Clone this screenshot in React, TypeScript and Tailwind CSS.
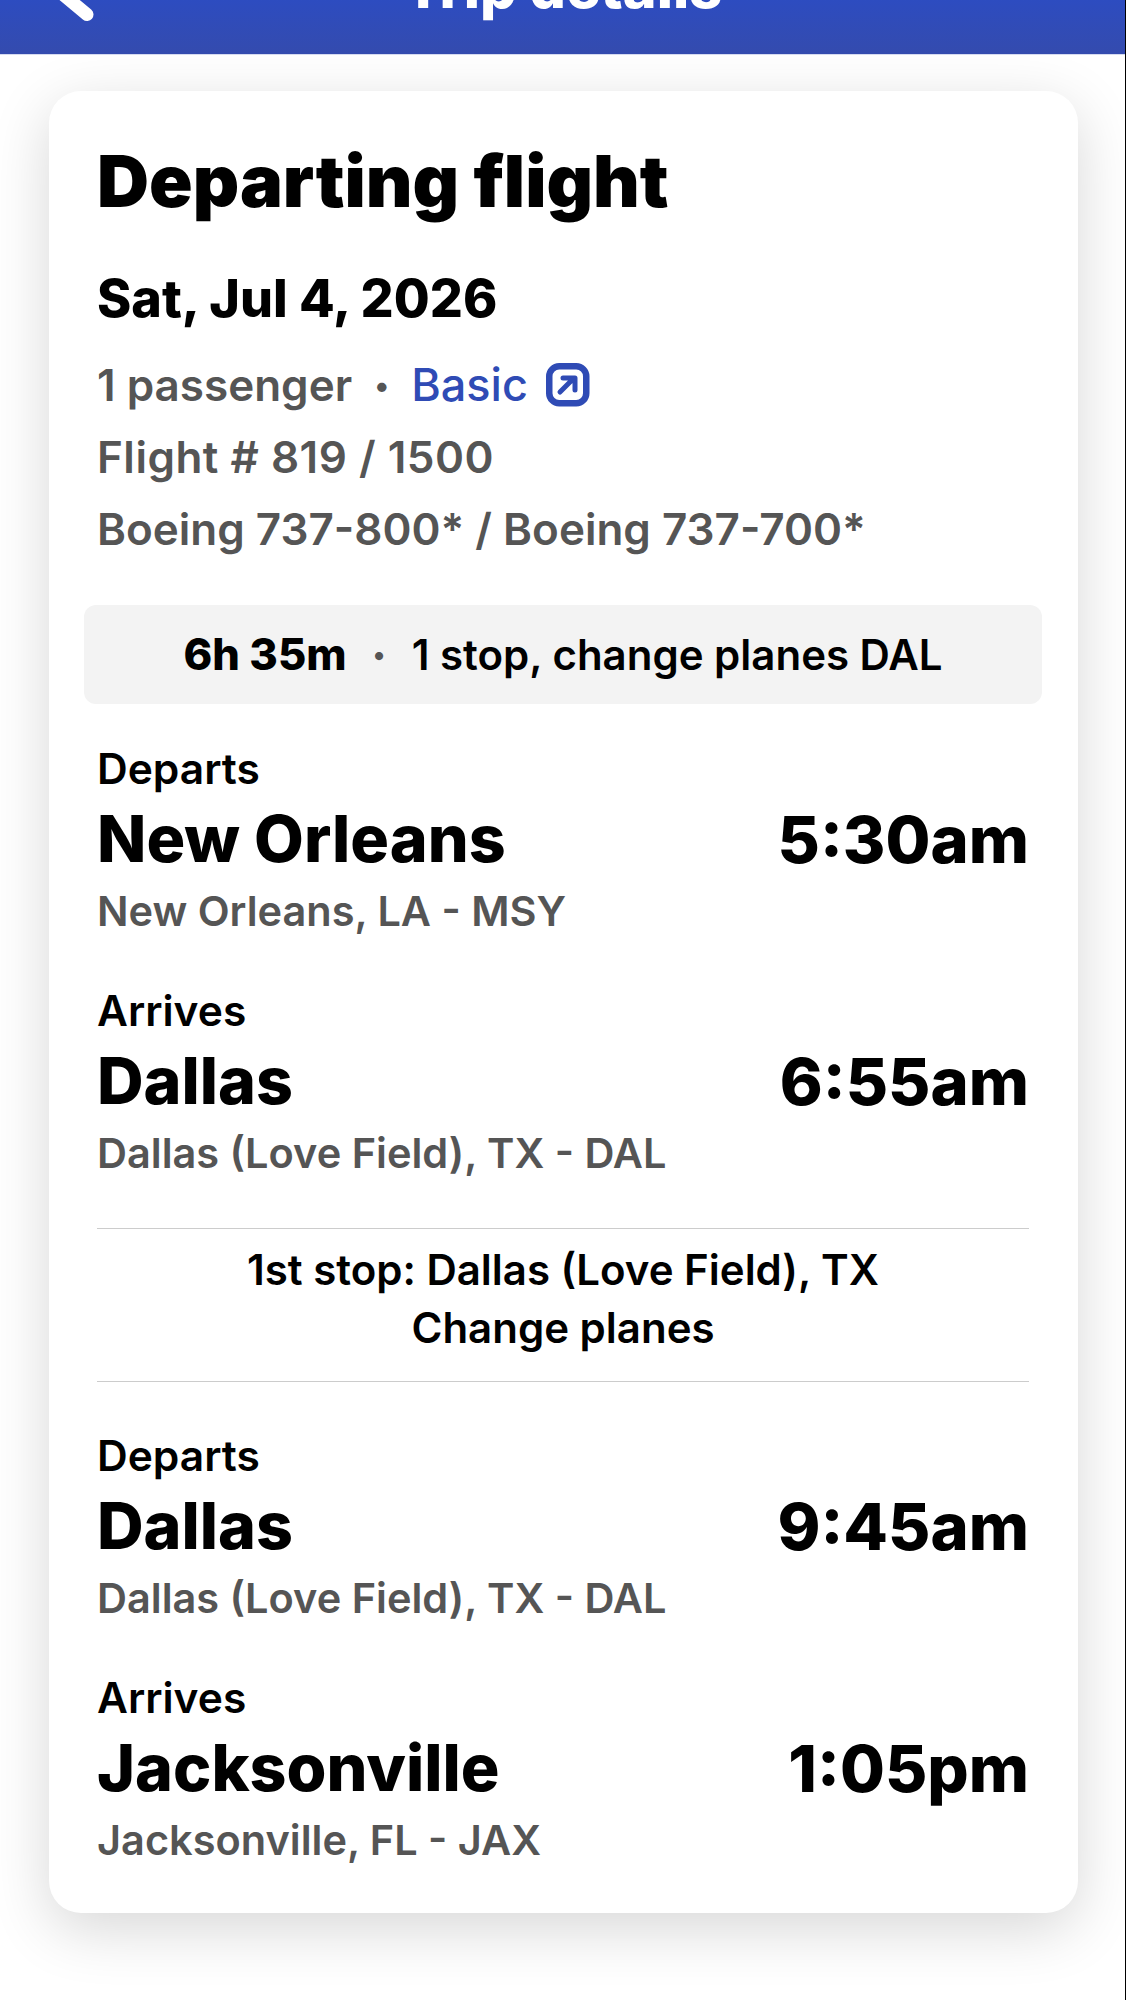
import React from "react";

function Leg({ label, city, time, place }: { label: string; city: string; time: string; place: string }) {
  return (
    <div>
      <div className="text-[42.5px] leading-[71px] font-semibold text-black">{label}</div>
      <div className="flex items-center justify-between leading-[71px] font-extrabold text-black">
        <span className="text-[64.5px]">{city}</span>
        <span className="text-[65px]">{time}</span>
      </div>
      <div className="text-[41.5px] leading-[73px] font-semibold text-[#555555]">{place}</div>
    </div>
  );
}

export default function App() {
  return (
    <div className="relative w-[1126px] h-[2000px] overflow-hidden bg-white font-['Inter',sans-serif]">
      <header className="relative h-[55px] bg-gradient-to-b from-[#2d4cc0] to-[#344bae] overflow-hidden border-b border-[#d5daf0]">
        <svg className="absolute left-[40px] top-[-40px]" width="70" height="70" viewBox="0 0 70 70" fill="none">
          <path d="M40 2 L14 27 L47 54.5" stroke="#fff" strokeWidth="13" strokeLinecap="round" strokeLinejoin="round" />
        </svg>
        <div className="absolute left-0 right-0 top-[-45px] text-center text-[57.5px] leading-[64px] font-extrabold text-white">Trip details</div>
      </header>
      <div className="absolute right-0 top-0 bottom-0 w-px bg-black" />
      <main className="pl-[49px] pr-[48px] pt-[36px]">
        <div className="rounded-[32px] bg-white shadow-[0_16px_60px_rgba(0,0,0,0.16)] h-[1822px] pl-[48px] pr-[49px] pt-[50px]">
          <h1 className="text-[72px] leading-[80px] font-black text-black">Departing flight</h1>
          <div className="mt-[48px] text-[52px] leading-[60px] font-extrabold text-black">Sat, Jul 4, 2026</div>
          <div className="mt-[20px] text-[44px] leading-[72px] font-semibold text-[#555555]">
            <div className="flex items-center">
              <span>1 passenger</span>
              <span className="mx-[22px] text-[30px]">•</span>
              <span className="text-[#2f4bb5] font-medium text-[45px]">Basic</span>
              <svg className="ml-[18px]" width="44" height="44" viewBox="0 0 44 44" fill="none">
                <rect x="3.25" y="3.25" width="37" height="37" rx="10" stroke="#2f4bb5" strokeWidth="6.5" />
                <path d="M14 29 L27 16 M17 15 H29 V27" stroke="#2f4bb5" strokeWidth="5" strokeLinecap="round" strokeLinejoin="round" />
              </svg>
            </div>
            <div className="tracking-[0.5px]">Flight # 819 / 1500</div>
            <div>Boeing 737-800* / Boeing 737-700*</div>
          </div>
          <div className="mt-[40px] -mx-[13px] h-[99px] rounded-[12px] bg-[#f3f3f3] flex items-center justify-center text-[42px] font-semibold text-black">
            <span className="font-extrabold text-[43.5px]">6h 35m</span>
            <span className="mx-[26px] text-[#555555] text-[26px]">•</span>
            <span>1 stop, change planes DAL</span>
          </div>
          <div className="mt-[29px]">
            <Leg label="Departs" city="New Orleans" time="5:30am" place="New Orleans, LA - MSY" />
          </div>
          <div className="mt-[27px]">
            <Leg label="Arrives" city="Dallas" time="6:55am" place="Dallas (Love Field), TX - DAL" />
          </div>
          <div className="mt-[38px] border-y border-[#cccccc] pt-[12px] pb-[24px] text-center text-[42px] leading-[58px] font-semibold text-black">
            <div>1st stop: Dallas (Love Field), TX</div>
            <div>Change planes</div>
          </div>
          <div className="mt-[38px]">
            <Leg label="Departs" city="Dallas" time="9:45am" place="Dallas (Love Field), TX - DAL" />
          </div>
          <div className="mt-[27px]">
            <Leg label="Arrives" city="Jacksonville" time="1:05pm" place="Jacksonville, FL - JAX" />
          </div>
        </div>
      </main>
    </div>
  );
}
